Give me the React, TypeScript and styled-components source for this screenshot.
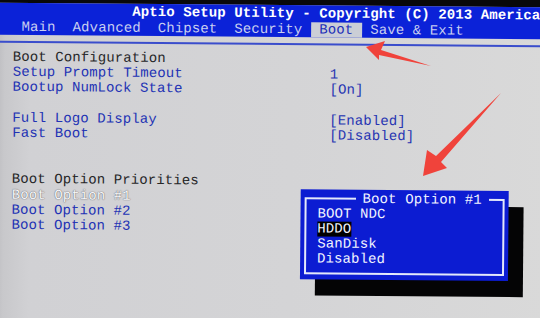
import styled, { createGlobalStyle } from "styled-components"

// Data //

type Row =
	| { label: string; value?: string; kind?: "heading" | "selected" | "item" }
	| null

const tabs = ["Main", "Advanced", "Chipset", "Security", "Boot", "Save & Exit"]

const rows: Row[] = [
	{ label: "Boot Configuration", kind: "heading" },
	{ label: "Setup Prompt Timeout", value: "1" },
	{ label: "Bootup NumLock State", value: "[On]" },
	null,
	{ label: "Full Logo Display", value: "[Enabled]" },
	{ label: "Fast Boot", value: "[Disabled]" },
	null,
	null,
	{ label: "Boot Option Priorities", kind: "heading" },
	{ label: "Boot Option #1", kind: "selected" },
	{ label: "Boot Option #2" },
	{ label: "Boot Option #3" }
]

const bootChoices = ["BOOT NDC", "HDDO", "SanDisk", "Disabled"]

// Components //

export default function App() {
	return (
		<>
			<GlobalStyle />
			<Page>
				<Screen>
					<Bezel />
					<Header>
						<TitleRow>Aptio Setup Utility - Copyright (C) 2013 America</TitleRow>
						<TabRow>
							{tabs.map((tab) => (
								<Tab key={tab} $active={tab === "Boot"}>
									{tab}
								</Tab>
							))}
						</TabRow>
					</Header>
					<Divider />
					<Content>
						{rows.map((row, i) =>
							row ? (
								<SettingRow key={i}>
									<Label $kind={row.kind ?? "item"}>{row.label}</Label>
									<Value>{row.value ?? ""}</Value>
								</SettingRow>
							) : (
								<BlankRow key={i} />
							)
						)}
					</Content>

					<Popup>
						<Frame>
							<FrameTitle>Boot Option #1</FrameTitle>
							<ChoiceList>
								{bootChoices.map((choice) => (
									<Choice key={choice}>
										<ChoiceText $focused={choice === "HDDO"}>{choice}</ChoiceText>
									</Choice>
								))}
							</ChoiceList>
						</Frame>
					</Popup>
				</Screen>

				<Arrows viewBox="0 0 540 318" width={540} height={318}>
					<polygon points="366,47 385,41 381,50 431,66 379,55 379,60" />
					<polygon points="423,176 427,150 436,156 501,93 441,162 447,168" />
				</Arrows>
			</Page>
		</>
	)
}

// Styled Components //

const GlobalStyle = createGlobalStyle`
	html, body {
		margin: 0;
		padding: 0;
		background: #d2d2d5;
		overflow: hidden;
	}
`

const Page = styled.div`
	position: relative;
	width: 540px;
	height: 318px;
	overflow: hidden;
	background: #d2d2d5;
	font-family: "Liberation Mono", "DejaVu Sans Mono", monospace;
	font-size: 14px;
	letter-spacing: 0.1px;
`

const Screen = styled.div`
	position: relative;
	width: 560px;
	height: 338px;
	margin: -10px 0 0 -10px;
	display: flex;
	flex-direction: column;
	transform: rotate(0.5deg);
	transform-origin: 280px 169px;
	background: linear-gradient(
		90deg,
		#b4b4b8 0px,
		#c8c8cb 14px,
		#d1d1d4 40px,
		#d4d4d6 300px,
		#d9d9d9 560px
	);
`

const Bezel = styled.div`
	height: 15px;
	background: #08080a;
`

const Header = styled.header`
	height: 32px;
	background: #0b22d8;
	display: flex;
	flex-direction: column;
	padding-left: 20px;
`

const TitleRow = styled.div`
	height: 16px;
	line-height: 16px;
	padding-left: 121px;
	color: #ffffff;
	font-weight: bold;
	white-space: pre;
`

const TabRow = styled.nav`
	display: flex;
	height: 16px;
	padding: 1px 0 0 2px;
	box-sizing: border-box;
	white-space: pre;
`

const Tab = styled.span<{ $active?: boolean }>`
	padding: 0 8.5px;
	line-height: 15px;
	height: 15px;
	color: ${({ $active }) => ($active ? "#1d2fb8" : "#c9cff0")};
	background: ${({ $active }) => ($active ? "#cbced6" : "transparent")};
`

const Divider = styled.div`
	height: 1.5px;
	margin-top: 6px;
	background: #3a4dcc;
`

const Content = styled.main`
	display: flex;
	flex-direction: column;
	padding: 7px 0 0 22px;
`

const SettingRow = styled.div`
	display: grid;
	grid-template-columns: 317px 1fr;
	height: 15.35px;
	line-height: 15.35px;
	white-space: pre;
`

const BlankRow = styled.div`
	height: 15.35px;
`

const Label = styled.span<{ $kind: "heading" | "selected" | "item" }>`
	color: ${({ $kind }) =>
		$kind === "heading" ? "#262628" : $kind === "selected" ? "#f6f6f8" : "#2232b4"};
	text-shadow: ${({ $kind }) =>
		$kind === "selected" ? "0 0 1px #6a6a70, 0 0 1px #6a6a70" : "none"};
`

const Value = styled.span`
	color: #2634b2;
`

const Popup = styled.section`
	position: absolute;
	left: 311px;
	top: 198.5px;
	width: 208px;
	box-sizing: border-box;
	padding: 2px 4px 5px;
	background: #0c1cd2;
	box-shadow: 15px 16px 0 0 #040405;
`

const Frame = styled.fieldset`
	margin: 0;
	padding: 0 0 6px 11px;
	border: 2px solid #e4e8fb;
	min-width: 0;
`

const FrameTitle = styled.legend`
	margin-left: 38px;
	padding: 0 7px;
	line-height: 15px;
	color: #f2f4ff;
	white-space: pre;
`

const ChoiceList = styled.ul`
	list-style: none;
	margin: 0;
	padding: 0;
`

const Choice = styled.li`
	height: 15px;
	line-height: 15px;
`

const ChoiceText = styled.span<{ $focused?: boolean }>`
	display: inline-block;
	color: #f2f4ff;
	background: ${({ $focused }) => ($focused ? "#000000" : "transparent")};
`

const Arrows = styled.svg`
	position: absolute;
	top: 0;
	left: 0;
	pointer-events: none;
	fill: #f0433b;
`
